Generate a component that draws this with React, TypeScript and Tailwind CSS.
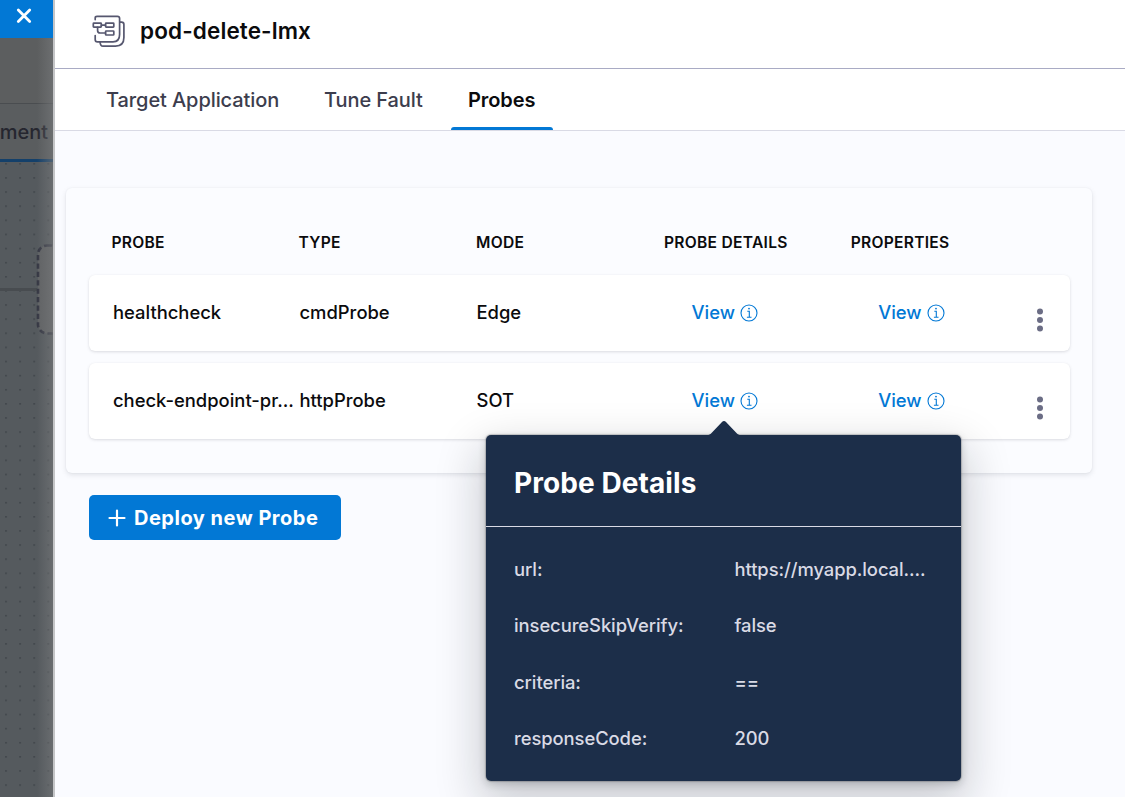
import type { ReactNode } from 'react';

const FONT = "font-['Inter','Liberation_Sans',sans-serif]";

function PipelineIcon() {
  return (
    <svg width="34" height="34" viewBox="0 0 34 34" fill="none" stroke="#56576f" strokeWidth="1.7" strokeLinecap="round" strokeLinejoin="round">
      <path d="M3.2 5.6V4C3.2 2.9 3.8 2.3 5 2.3H25.4C26.8 2.3 27.6 3 27.6 4.5V20.5C27.6 25.6 25.6 27.8 21 27.8H5.4C4 27.8 3.2 27 3.2 25.4V21.6" />
      <path d="M28 8.2H29.6C31.2 8.2 31.9 9 31.9 10.6V23.6C31.9 29.6 29.4 32.1 23.6 32.1H11C9 32.1 8.2 31 8.1 28.2" />
      <rect x="1.3" y="9.2" width="8" height="4" rx="0.6" />
      <rect x="13.6" y="9.2" width="8.2" height="4" rx="0.6" />
      <rect x="13.6" y="17" width="8.2" height="4" rx="0.6" />
      <path d="M9.4 11.2H13.4M5.6 13.4V16.4C5.6 18.2 6.4 19 8.2 19H13.4" />
    </svg>
  );
}

function InfoIcon() {
  return (
    <svg width="18" height="18" viewBox="0 0 18 18" fill="none" stroke="#0278d5" strokeWidth="1.1">
      <circle cx="9" cy="9" r="8" />
      <path d="M7.3 7.2H9.3V13.1M6.9 13.3H11.5" />
      <circle cx="9" cy="4.6" r="0.9" fill="#0278d5" stroke="none" />
    </svg>
  );
}

function MoreIcon() {
  return (
    <svg width="8" height="24" viewBox="0 0 8 24" fill="#6b6d85">
      <circle cx="4" cy="3.6" r="3" />
      <circle cx="4" cy="12" r="3" />
      <circle cx="4" cy="20.4" r="3" />
    </svg>
  );
}

function ViewLink({ children }: { children?: ReactNode }) {
  return (
    <div className="relative flex items-center gap-[5px] text-[#0278d5]">
      <span>View</span>
      <InfoIcon />
      {children}
    </div>
  );
}

const details = [
  { label: 'url:', value: 'https://myapp.local....' },
  { label: 'insecureSkipVerify:', value: 'false' },
  { label: 'criteria:', value: '==' },
  { label: 'responseCode:', value: '200' },
];

function ProbeDetails() {
  return (
    <div className="absolute top-[48px] -left-[205.5px] z-10 w-[475px] rounded-[5px] bg-[#1c2e49] shadow-[0_0_1px_1px_rgba(16,22,26,0.2),0_3px_8px_rgba(16,22,26,0.2),0_18px_46px_6px_rgba(16,22,26,0.2)]">
      <svg className="absolute -top-[14px] left-[221px]" width="34" height="15" viewBox="0 0 34 15" fill="#1c2e49">
        <path d="M0 15V14C2 14 3.4 13.2 5 11.4L15 1C16.2 -0.2 17.8 -0.2 19 1L29 11.4C30.6 13.2 32 14 34 14V15Z" />
      </svg>
      <div className="flex h-[92px] items-center border-b border-[#d9dae5] pt-[5px] pl-7 text-[28px] font-bold tracking-[0.08px] text-white">
        Probe Details
      </div>
      <div className="flex h-[254px] flex-col pt-[14px] pl-7 text-[18.4px] font-medium tracking-[-0.07px] text-[#d9dae5]">
        {details.map((d) => (
          <div key={d.label} className="flex h-[56.5px] items-center">
            <span className="w-[220.5px]">{d.label}</span>
            <span>{d.value}</span>
          </div>
        ))}
      </div>
    </div>
  );
}

const columns = 'grid grid-cols-[186.5px_177px_215px_186.7px_1fr]';

function ProbeRow({ name, type, mode, open }: { name: string; type: string; mode: string; open?: boolean }) {
  return (
    <div className="flex h-[76px] items-center rounded-md bg-white pl-6 text-[18.4px] font-medium text-[#0b0b0d] shadow-[0_0_1px_rgba(40,41,61,0.04),0_1px_3px_rgba(96,97,112,0.2)]">
      <div className={`${columns} flex-1`}>
        <span>{name}</span>
        <span>{type}</span>
        <span>{mode}</span>
        <ViewLink>{open && <ProbeDetails />}</ViewLink>
        <ViewLink />
      </div>
      <div className="mt-[14px] mr-[26px]">
        <MoreIcon />
      </div>
    </div>
  );
}

function Backdrop() {
  return (
    <aside className="relative flex w-[53px] shrink-0 flex-col overflow-hidden bg-[#585d60]">
      <button className="flex h-[38px] shrink-0 items-start bg-[#0278d5] pt-[8px] pl-[16px]">
        <svg width="16" height="16" viewBox="0 0 16 16" stroke="#fff" strokeWidth="2.8" strokeLinecap="round">
          <path d="M2.3 2L13.7 13.4M13.7 2L2.3 13.4" />
        </svg>
      </button>
      <div className="h-[66px] shrink-0 border-b border-[#4a4d50] bg-[#5c5e5f]" />
      <div className="flex h-[58px] shrink-0 items-center justify-end border-b-[3px] border-[#14406a] bg-[#5a5d5f] pr-[5px] text-[20px] font-medium text-[#25262f]">
        <span>ment</span>
      </div>
      <div className="relative flex-1 bg-[#555a5e]">
        <svg className="absolute inset-0" width="53" height="635">
          <defs>
            <pattern id="dots" x="5" y="1" width="14.12" height="14.12" patternUnits="userSpaceOnUse">
              <rect width="2" height="1.6" fill="#43484d" />
            </pattern>
          </defs>
          <rect width="53" height="635" fill="url(#dots)" />
          <path d="M0 127.5H37" stroke="#484c50" strokeWidth="3" />
          <rect x="38" y="83.5" width="60" height="88" rx="9" fill="#616365" stroke="#363844" strokeWidth="2.6" strokeDasharray="5.2 3.2" />
        </svg>
      </div>
      <div className="absolute top-[38px] right-0 bottom-0 w-[16px] bg-linear-to-r from-[#77797b]/0 to-[#77797b]/60" />
    </aside>
  );
}

export default function App() {
  return (
    <div className={`${FONT} flex h-[797px] w-[1125px] overflow-hidden whitespace-nowrap`}>
      <Backdrop />
      <main className="flex flex-1 flex-col border-l-2 border-[#c4c5c7] bg-[#fafbff]">
        <header className="flex h-[69px] shrink-0 items-center border-b border-[#a9abc4] bg-white pb-[6px] pl-[37px]">
          <PipelineIcon />
          <h1 className="ml-[14px] text-[22.5px] font-semibold tracking-[0.13px] text-[#0b0b0d]">pod-delete-lmx</h1>
        </header>
        <nav className="flex h-[62px] shrink-0 border-b border-[#d9dae5] bg-white pl-[34px] text-[20px] font-medium tracking-[-0.08px] text-[#3c3d4d]">
          <span className="flex h-[61px] w-[218px] items-center pl-[17px]">Target Application</span>
          <span className="flex h-[61px] w-[144px] items-center pl-[17px]">Tune Fault</span>
          <span className="relative flex h-[61px] w-[102px] items-center pl-[17px] font-semibold text-[#0b0b0d]">
            Probes
            <i className="absolute bottom-0 left-0 h-[3px] w-full rounded-t-[3px] bg-[#0278d5]" />
          </span>
        </nav>
        <section className="mt-[57px] ml-[11px] h-[285px] w-[1026px] shrink-0 rounded-md bg-[#fbfcff] pr-[22px] pl-[23px] shadow-[0_0_2px_rgba(40,41,61,0.05),0_2px_5px_rgba(96,97,112,0.16)]">
          <div className={`${columns} h-[87px] items-center pt-[22px] pl-[22.5px] text-[15.6px] font-semibold tracking-[0.27px] text-[#0b0b0d]`}>
            <span>PROBE</span>
            <span className="pl-[0.5px]">TYPE</span>
            <span className="pl-[1px]">MODE</span>
            <span className="-ml-[26px]">PROBE DETAILS</span>
            <span className="-ml-[26px]">PROPERTIES</span>
          </div>
          <div className="flex flex-col gap-[12px]">
            <ProbeRow name="healthcheck" type="cmdProbe" mode="Edge" />
            <ProbeRow name="check-endpoint-pr..." type="httpProbe" mode="SOT" open />
          </div>
        </section>
        <button className="mt-[22px] ml-[34px] flex h-[45px] w-[252px] shrink-0 items-center rounded-[5px] bg-[#0278d5] pl-[19px] text-[20px] font-bold text-white">
          <svg width="18" height="18" viewBox="0 0 18 18" stroke="#fff" strokeWidth="2.2" strokeLinecap="round">
            <path d="M9 1.5V16.5M1.5 9H16.5" />
          </svg>
          <span className="ml-[8px] tracking-[0.5px]">Deploy new Probe</span>
        </button>
      </main>
    </div>
  );
}
